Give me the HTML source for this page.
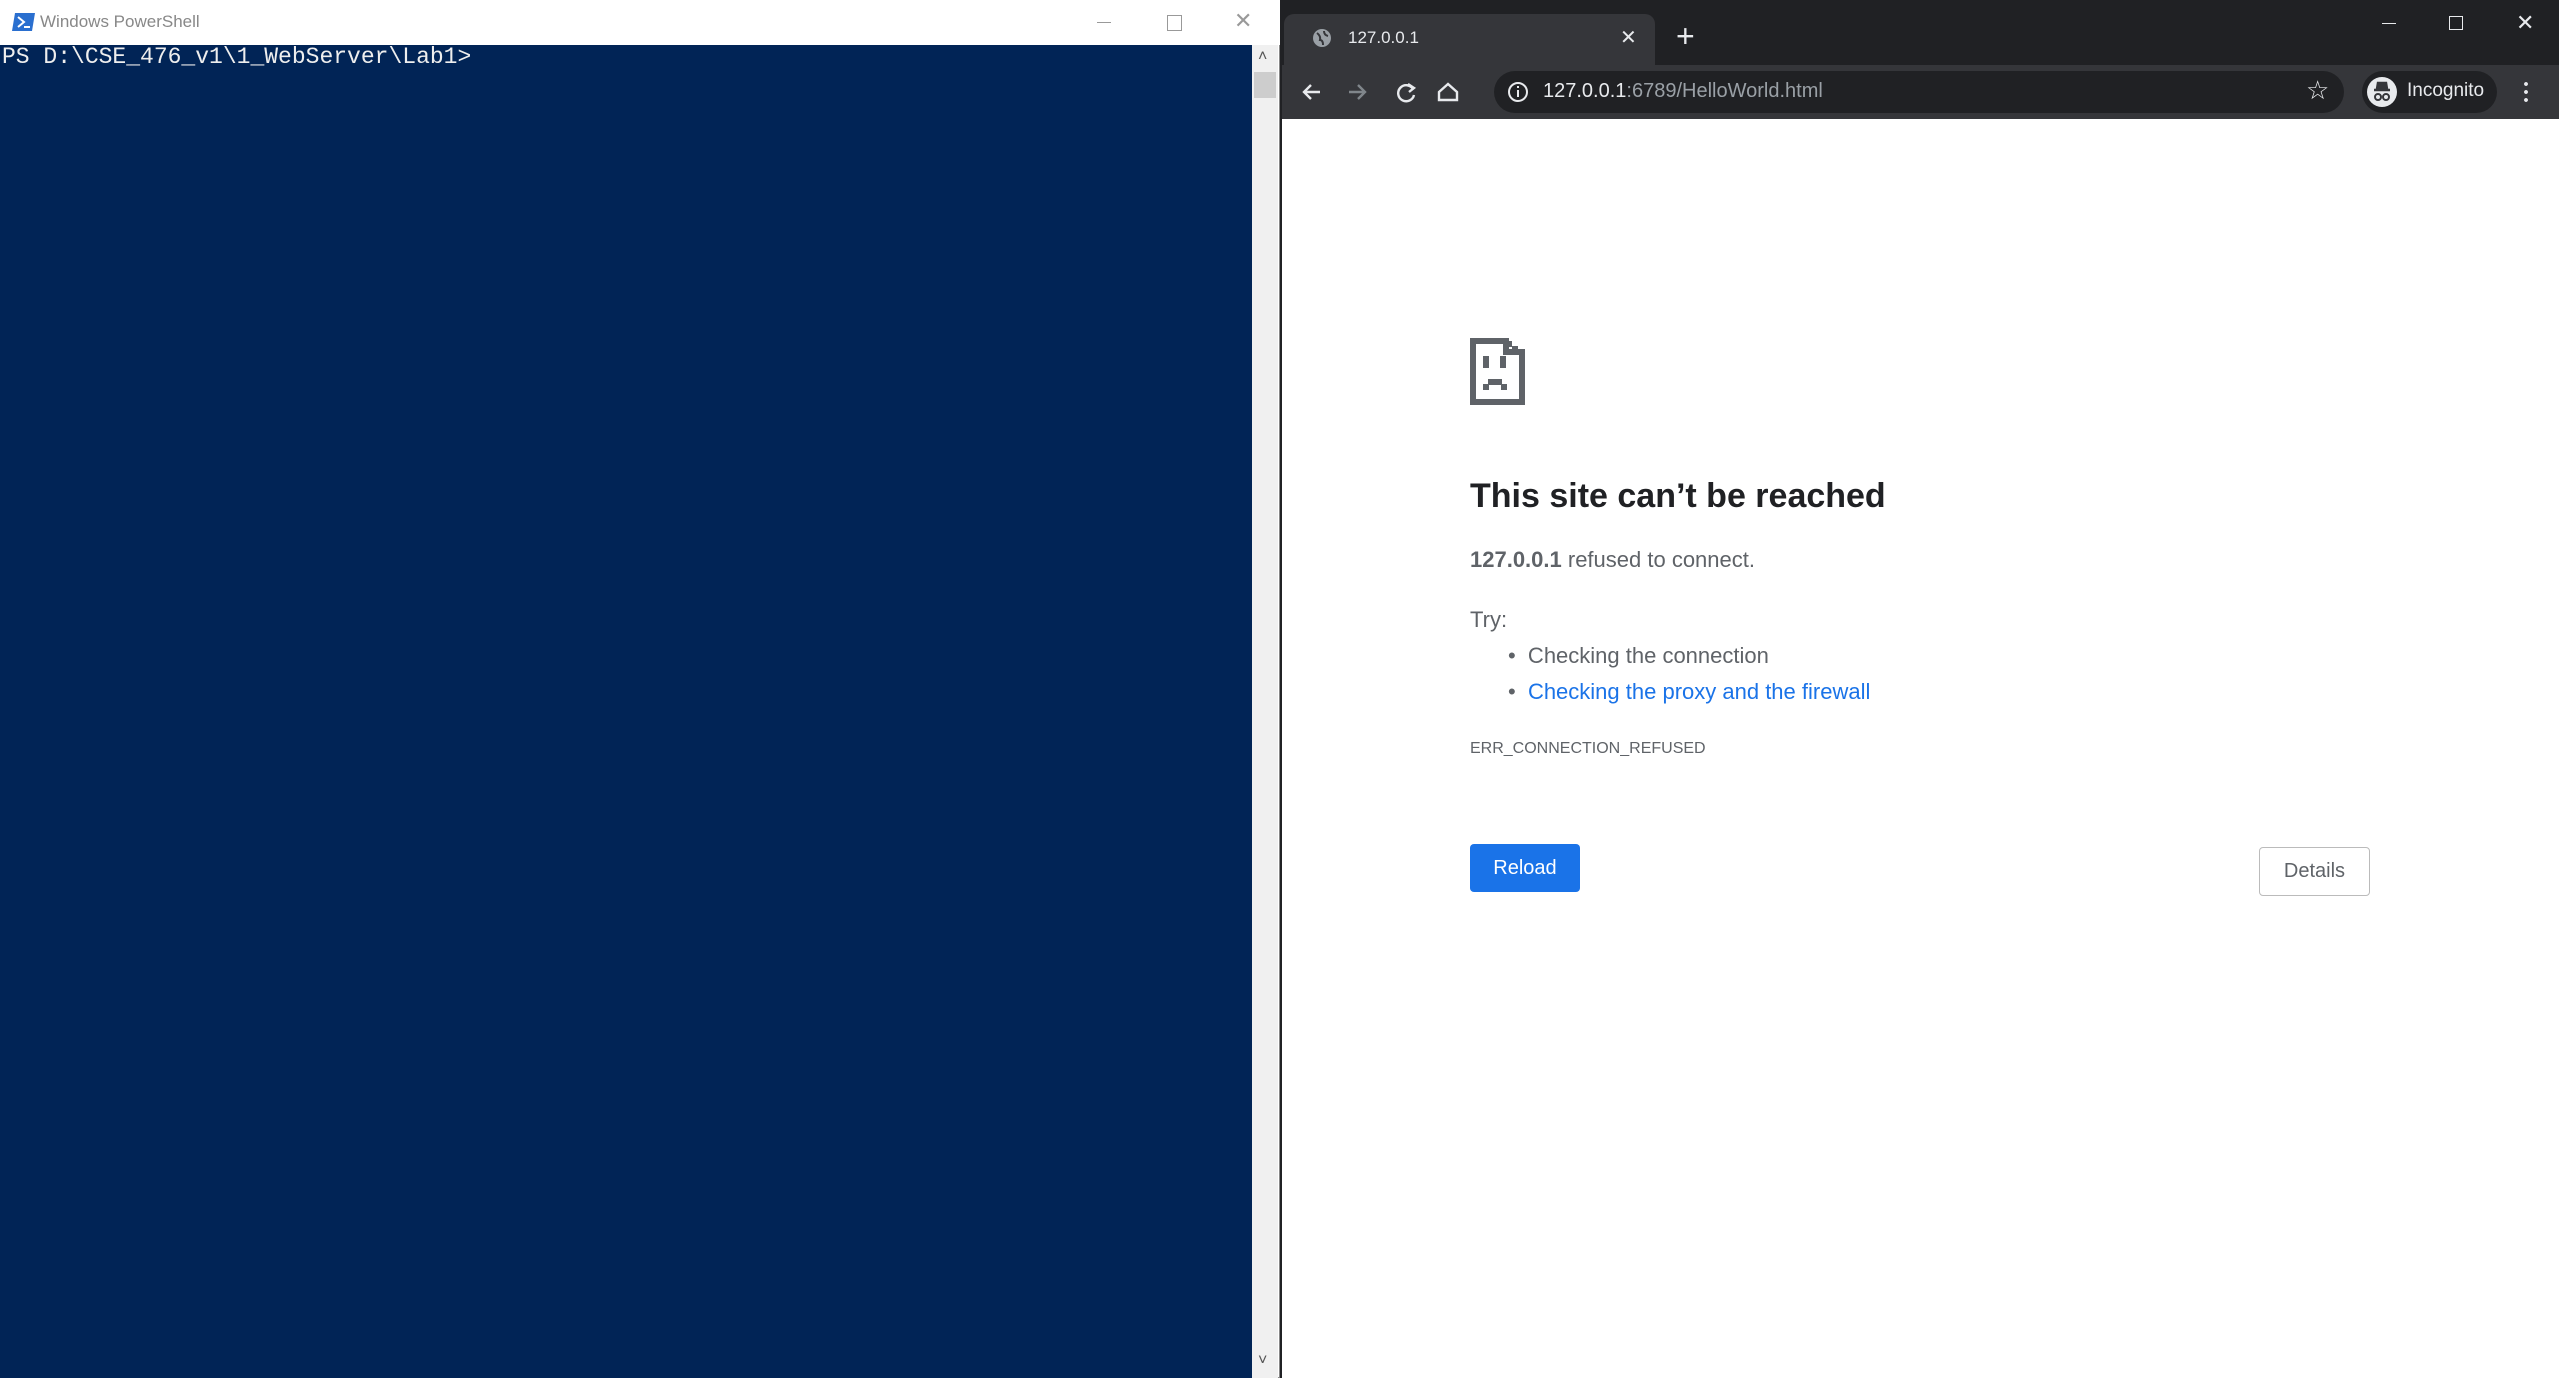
<!DOCTYPE html>
<html><head><meta charset="utf-8"><style>
*{margin:0;padding:0;box-sizing:border-box}
body{width:2559px;height:1378px;overflow:hidden;background:#202124;font-family:"Liberation Sans",sans-serif;position:relative}
.abs{position:absolute}
</style></head><body>
<!-- PowerShell -->
<div class="abs" style="left:0;top:0;width:1280px;height:1378px;background:#fff;border:1px solid #888"></div>
<div class="abs" style="left:0;top:0;width:1280px;height:45px;background:#fff"></div>
<svg class="abs" style="left:12px;top:12px" width="24" height="20"><polygon points="3,1 23,1 20,19 0,19" fill="#2a6fcf"/><path d="M6 5 L12 10 L6 15" stroke="#fff" stroke-width="2" fill="none"/><rect x="12" y="14" width="6" height="2" fill="#fff"/></svg>
<div class="abs" style="left:40px;top:12px;font-size:17px;color:#888">Windows PowerShell</div>
<div class="abs" style="left:1097px;top:22px;width:14px;height:1px;background:#999"></div>
<div class="abs" style="left:1167px;top:15px;width:15px;height:16px;border:1px solid #999"></div>
<div class="abs" style="left:1234px;top:8px;font-size:22px;color:#999">✕</div>
<div class="abs" style="left:0;top:45px;width:1252px;height:1333px;background:#012456"></div>
<div class="abs" style="left:2px;top:42px;font-family:'Liberation Mono',monospace;font-size:23px;line-height:30px;color:#eee;white-space:pre">PS D:\CSE_476_v1\1_WebServer\Lab1></div>
<div class="abs" style="left:1252px;top:45px;width:26px;height:1333px;background:#f0f0f0"></div>
<div class="abs" style="left:1254px;top:72px;width:22px;height:26px;background:#cdcdcd"></div>
<div class="abs" style="left:1258px;top:48px;font-size:16px;color:#555">˄</div>
<div class="abs" style="left:1258px;top:1352px;font-size:16px;color:#555">˅</div>
<!-- Chrome -->
<div class="abs" style="left:1282px;top:0;width:1277px;height:1378px;background:#202124"></div>
<div class="abs" style="left:1284px;top:14px;width:371px;height:51px;background:#35363a;border-radius:10px 10px 0 0"></div>
<svg class="abs" style="left:1312px;top:28px" width="20" height="20"><circle cx="10" cy="10" r="9" fill="#9aa0a6"/><path d="M5 5 Q9 8 8 12 Q11 12 11 17 M12 3 Q12 7 16 8" stroke="#35363a" stroke-width="2" fill="none"/></svg>
<div class="abs" style="left:1348px;top:28px;font-size:17px;color:#e8eaed">127.0.0.1</div>
<div class="abs" style="left:1620px;top:25px;font-size:20px;color:#e8eaed">✕</div>
<div class="abs" style="left:1676px;top:18px;font-size:32px;color:#e8eaed;font-weight:300">+</div>
<div class="abs" style="left:2382px;top:23px;width:14px;height:1px;background:#e8eaed"></div>
<div class="abs" style="left:2449px;top:16px;width:14px;height:14px;border:1px solid #e8eaed"></div>
<div class="abs" style="left:2516px;top:10px;font-size:22px;color:#e8eaed">✕</div>
<div class="abs" style="left:1282px;top:65px;width:1277px;height:54px;background:#35363a"></div>
<svg class="abs" style="left:1300px;top:78px" width="160" height="28" fill="none" stroke-width="2.4">
<path d="M20 14 H4 M11 7 L4 14 L11 21" stroke="#e8eaed"/>
<path d="M49 14 H65 M58 7 L65 14 L58 21" stroke="#80868b"/>
<path d="M113 11 A8 8 0 1 0 114 17" stroke="#e8eaed"/><path d="M108 6 L114 10 L109 14" stroke="#e8eaed"/>
<path d="M148 6 L139 14 V22 H157 V14 Z" stroke="#e8eaed"/></svg>
<div class="abs" style="left:1494px;top:71px;width:850px;height:42px;background:#202124;border-radius:21px"></div>
<svg class="abs" style="left:1507px;top:81px" width="22" height="22"><circle cx="11" cy="11" r="9" stroke="#e8eaed" stroke-width="2" fill="none"/><rect x="10" y="9" width="2" height="7" fill="#e8eaed"/><rect x="10" y="5" width="2" height="2" fill="#e8eaed"/></svg>
<div class="abs" style="left:1543px;top:80px;font-size:20px;color:#e8eaed">127.0.0.1<span style="color:#9aa0a6">:6789/HelloWorld.html</span></div>
<div class="abs" style="left:2306px;top:75px;font-size:26px;color:#e8eaed">☆</div>
<div class="abs" style="left:2362px;top:71px;width:135px;height:42px;background:#202124;border-radius:21px"></div>
<svg class="abs" style="left:2366px;top:76px" width="32" height="32"><circle cx="16" cy="16" r="15" fill="#e8eaed"/><path d="M8 14 H24 M11 13 L12 7 H20 L21 13" stroke="#35363a" stroke-width="2.5" fill="#35363a"/><circle cx="12" cy="21" r="3" stroke="#35363a" stroke-width="2" fill="none"/><circle cx="20" cy="21" r="3" stroke="#35363a" stroke-width="2" fill="none"/></svg>
<div class="abs" style="left:2407px;top:80px;font-size:19px;color:#e8eaed">Incognito</div>
<div class="abs" style="left:2524px;top:80px;width:4px;height:22px;background:radial-gradient(circle,#e8eaed 1.8px,transparent 2px) 0 0/4px 8px"></div>
<!-- content -->
<div class="abs" style="left:1282px;top:119px;width:1277px;height:1259px;background:#fff"></div>
<svg class="abs" style="left:1470px;top:338px" width="55" height="67" shape-rendering="crispEdges"><path d="M3 3 H36 V14 H52 V64 H3 Z" stroke="#5f6368" stroke-width="6" fill="none"/><rect x="36" y="3" width="6" height="6" fill="#5f6368"/><rect x="42" y="8" width="6" height="6" fill="#5f6368"/><rect x="13" y="18" width="6" height="12" fill="#5f6368"/><rect x="30" y="18" width="6" height="12" fill="#5f6368"/><rect x="13" y="46" width="6" height="6" fill="#5f6368"/><rect x="18" y="41" width="14" height="6" fill="#5f6368"/><rect x="31" y="46" width="6" height="6" fill="#5f6368"/></svg>
<div class="abs" style="left:1470px;top:477px;font-size:34px;font-weight:bold;color:#202124">This site can’t be reached</div>
<div class="abs" style="left:1470px;top:547px;font-size:22px;color:#5f6368"><b>127.0.0.1</b> refused to connect.</div>
<div class="abs" style="left:1470px;top:607px;font-size:22px;color:#5f6368">Try:</div>
<div class="abs" style="left:1508px;top:643px;font-size:22px;color:#5f6368">•&nbsp;&nbsp;Checking the connection</div>
<div class="abs" style="left:1508px;top:679px;font-size:22px;color:#5f6368">•&nbsp;&nbsp;<span style="color:#1a73e8">Checking the proxy and the firewall</span></div>
<div class="abs" style="left:1470px;top:740px;font-size:16px;color:#5f6368">ERR_CONNECTION_REFUSED</div>
<div class="abs" style="left:1470px;top:844px;width:110px;height:48px;background:#1a73e8;border-radius:4px;color:#fff;font-size:20px;text-align:center;line-height:48px">Reload</div>
<div class="abs" style="left:2259px;top:847px;width:111px;height:49px;border:1px solid #bbb;border-radius:4px;color:#5f6368;font-size:20px;text-align:center;line-height:47px">Details</div>
</body></html>
